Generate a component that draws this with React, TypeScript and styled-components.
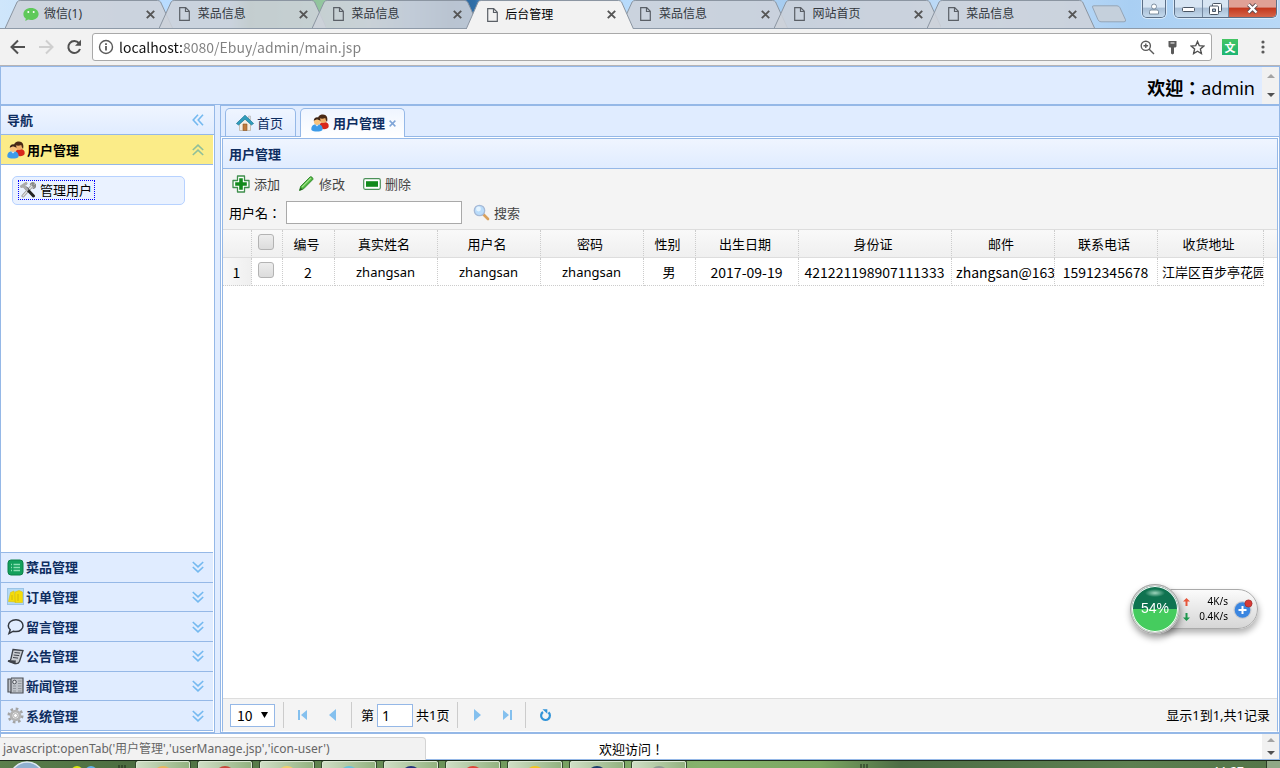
import React from 'react';
import styled, { createGlobalStyle, css } from 'styled-components';

const line = '#95b8e7';
const pale = '#e0ecff';
const navy = '#0e2d5f';
const uiFont = '"Noto Sans", "Noto Sans CJK SC", sans-serif';
const centredPunctuation = '"Noto Sans", "Noto Sans CJK TC", sans-serif';

const GlobalStyle = createGlobalStyle`
  * { box-sizing: border-box; }
  body { margin: 0; background: #fff; color: #000; font: 13px/20px ${uiFont}; }
  button, input, select { font: inherit; color: inherit; margin: 0; }
  button { padding: 0; border: 0; background: none; }
  svg { display: block; flex: none; }
  h1, h2, p { margin: 0; font-size: inherit; }
`;

const Page = styled.div`
  display: flex;
  flex-direction: column;
  height: 100vh;
  overflow: hidden;
`;

/* ---------- browser frame ---------- */

const TabStrip = styled.header`
  display: flex;
  flex: none;
  justify-content: space-between;
  height: 29px;
  padding-left: 12px;
  border-bottom: 1px solid #8e9aa8;
  background: linear-gradient(90deg, #cfe6fb 0, #b9dcff 160px, #b4d8f8 230px, #7fae86 250px, #93c79f 325px, #a9c9c4 370px,
    #6f9fc8 410px, #2f6394 450px, #2f6fa8 475px, #a7cdf2 500px, #b9dcfc 640px, #a5cbef 800px, #c6e0fa 1000px, #a9cff3 1130px, #b8d8f6 100%);
`;

const TabRow = styled.nav`
  display: flex;
  flex: 0 1 1115px;
  min-width: 0;
`;

const BrowserTabBox = styled.div<{ $active?: boolean }>`
  position: relative;
  z-index: ${p => (p.$active ? 2 : 1)};
  display: flex;
  flex: 0 1 154px;
  align-items: center;
  gap: 5px;
  height: ${p => (p.$active ? 29 : 28)}px;
  padding: 0 11px;
  color: ${p => (p.$active ? '#000' : '#33383e')};
  font-size: 12px;
`;

const TabShape = styled.svg`
  position: absolute;
  inset: 0 -7px;
  z-index: -1;
  width: calc(100% + 14px);
  height: 100%;
`;

const TabTitle = styled.span`
  flex: 1;
  overflow: hidden;
  white-space: nowrap;
`;

const IconSlot = styled.span`
  display: flex;
  flex: none;
  justify-content: center;
  width: 16px;
`;

const NewTab = styled.button`
  align-self: center;
  margin-left: 3px;
`;

const WindowControls = styled.div`
  display: flex;
  flex: none;
  gap: 8px;
  height: 18px;
  padding-right: 3px;
`;

const ControlGroup = styled.div`
  display: flex;
  overflow: hidden;
  border: 1px solid #5c6f86;
  border-top: 0;
  border-radius: 0 0 5px 5px;
  box-shadow: 0 0 0 1px #d9eafa;
`;

const controlWidths = { user: 22, wide: 28, plain: 26, close: 47 };

const ControlButton = styled.button<{ $kind: keyof typeof controlWidths }>`
  display: flex;
  align-items: center;
  justify-content: center;
  width: ${p => controlWidths[p.$kind]}px;
  border-right: 1px solid #7488a0;
  background: ${p =>
    p.$kind === 'close'
      ? 'linear-gradient(#e0a196 0 40%, #c43a20 50%, #d5654a)'
      : 'linear-gradient(#d7e5f3 0 40%, #a9bfd6 50%, #c4d9ec)'};
  &:last-child { border-right: 0; }
`;

const AddressBar = styled.div`
  display: flex;
  flex: none;
  align-items: center;
  height: 37px;
  padding: 0 9px;
  border-bottom: 1px solid #b6b4b6;
  background: #f2f2f2;
`;

const NavButtons = styled.div`
  display: flex;
  gap: 10px;
  width: 83px;
`;

const Omnibox = styled.label`
  display: flex;
  flex: 1;
  align-items: center;
  gap: 10px;
  height: 28px;
  padding: 0 6px 0 5px;
  border: 1px solid #a9a9a9;
  border-radius: 3px;
  background: #fff;
`;

const UrlField = styled.input`
  flex: 1;
  min-width: 0;
  height: 24px;
  margin-left: -5px;
  padding: 0;
  border: 0;
  outline: 0;
  background: linear-gradient(90deg, #111 64px, #808080 64px);
  background-clip: text;
  color: transparent;
  font: 14px/24px "Noto Sans CJK SC", sans-serif;
`;

const Extensions = styled.div`
  display: flex;
  align-items: center;
  gap: 18px;
  padding-left: 10px;
`;

const Translate = styled.button`
  width: 16px;
  height: 16px;
  background: linear-gradient(#43c463, #1db573);
  color: #fff;
  font: bold 11px/16px "Noto Sans CJK SC", sans-serif;
`;

/* ---------- page layout ---------- */

const Banner = styled.section`
  display: flex;
  flex: none;
  height: 39px;
  border: 1px solid ${line};
  background: ${pale};
`;

const Welcome = styled.h1`
  flex: 1;
  padding: 6px 7px 0 0;
  font-family: ${centredPunctuation};
  font-size: 18px;
  line-height: 30px;
  font-weight: 400;
  text-align: right;
`;

const ScrollRail = styled.div`
  display: flex;
  flex-direction: column;
  align-items: center;
  justify-content: space-around;
  width: 17px;
  background: #f1f1f1;
`;

const Middle = styled.main`
  display: flex;
  flex: 1;
  gap: 5px;
  min-height: 0;
  background: ${pale};
`;

const West = styled.aside`
  display: flex;
  flex: none;
  flex-direction: column;
  width: 215px;
  border: 1px solid ${line};
  background: #fff;
`;

const PanelTitle = styled.h2`
  display: flex;
  flex: none;
  align-items: center;
  justify-content: space-between;
  height: 30px;
  padding: 0 10px 0 6px;
  border-bottom: 1px solid ${line};
  background: linear-gradient(#eff5ff, ${pale});
  color: ${navy};
  font-weight: 700;
`;

const WestTitle = styled(PanelTitle)`
  height: 29px;
`;

const Accordion = styled.nav`
  display: flex;
  flex: 1;
  flex-direction: column;
  min-height: 0;
  padding: 0 1px 1px 0;
`;

const AccordionHead = styled.button<{ $open?: boolean }>`
  display: flex;
  align-items: center;
  gap: 2px;
  width: 100%;
  padding: 0 9px 0 6px;
  background: ${pale};
  color: ${navy};
  font-weight: 700;
  text-align: left;
  border-top: 1px solid ${line};
  ${p => p.$open && css`
    flex: none;
    height: 30px;
    border-top: 0;
    border-bottom: 1px solid ${line};
    background: #fbec88;
    color: #000;
  `}
  span { flex: 1; }
`;

const AccordionBody = styled.div`
  flex: 1;
  padding: 11px 28px 0 11px;
`;

const Collapsed = styled.div`
  display: grid;
  flex: none;
  grid-auto-rows: 1fr;
  height: 179px;
  border-bottom: 1px solid ${line};
`;

const MenuItem = styled.div`
  display: flex;
  height: 29px;
  padding: 3px 5px;
  border: 1px solid #b7d2ff;
  border-radius: 5px;
  background: #eaf2ff;
`;

const MenuLink = styled.a`
  display: flex;
  align-items: center;
  gap: 4px;
  height: 20px;
  padding: 0 2px 0 1px;
  border: 1px dotted #00f;
  color: #000;
  text-decoration: none;
`;

const Center = styled.section`
  display: flex;
  flex: 1;
  flex-direction: column;
  min-width: 0;
  border: 1px solid ${line};
  background: #fff;
`;

const PageTabs = styled.nav`
  display: flex;
  flex: none;
  align-items: flex-end;
  gap: 4px;
  height: 31px;
  padding-left: 4px;
  border-bottom: 1px solid ${line};
  background: ${pale};
`;

const PageTab = styled.button<{ $active?: boolean }>`
  display: flex;
  align-items: center;
  gap: 3px;
  height: 28px;
  padding: 0 12px 0 10px;
  border: 1px solid ${line};
  border-bottom: 0;
  border-radius: 5px 5px 0 0;
  background: linear-gradient(#eff5ff, ${pale});
  color: ${navy};
  ${p => p.$active && css`
    gap: 4px;
    height: 29px;
    margin-bottom: -1px;
    padding-right: 8px;
    background: linear-gradient(#eff5ff, #fff);
    font-weight: 700;
  `}
`;

const Panel = styled.section`
  display: flex;
  flex: 1;
  flex-direction: column;
  min-height: 0;
  margin: 1px 1px 0;
  border: 1px solid ${line};
  border-bottom: 1px solid #fff;
`;

const Tools = styled.div`
  flex: none;
  height: 61px;
  border-bottom: 1px solid #ddd;
  background: #f4f4f4;
`;

const ToolLine = styled.div`
  display: flex;
  align-items: center;
  gap: 18px;
  height: 29px;
  padding-left: 9px;
`;

const SearchLine = styled(ToolLine)`
  gap: 11px;
  padding-left: 6px;
`;

const ToolButton = styled.button`
  display: flex;
  align-items: center;
  gap: 4px;
  color: #444;
`;

const Field = styled.label`
  display: flex;
  align-items: center;
  gap: 5px;
  font-family: ${centredPunctuation};
`;

const NameInput = styled.input`
  width: 176px;
  height: 23px;
  border: 1px solid #a9a9a9;
  background: #fff;
`;

const GridArea = styled.div`
  flex: 1;
  min-height: 0;
  overflow: hidden;
`;

const DataTable = styled.table`
  width: 100%;
  table-layout: fixed;
  border-collapse: separate;
  border-spacing: 0;
  th, td {
    height: 28px;
    padding: 0 5px 0 4px;
    overflow: hidden;
    border-right: 1px dotted #ccc;
    font-weight: 400;
    text-align: center;
    white-space: nowrap;
  }
  thead tr { background: linear-gradient(#f9f9f9, #efefef); }
  thead th { padding-right: 8px; border-bottom: 1px solid #ddd; }
  td { border-bottom: 1px dotted #ccc; }
  th:last-child, td:last-child { border-right: 0; }
  td:last-child { border-bottom: 0; }
`;

const Cell = styled.td<{ $numeric?: boolean; $clip?: boolean }>`
  ${p => p.$numeric && css`font-family: "Noto Sans CJK SC", sans-serif; font-size: 14px; line-height: 18px;`}
  && {
    padding-right: ${p => (p.$clip ? 0 : 5)}px;
    text-align: ${p => (p.$clip ? 'left' : 'center')};
  }
`;

const RowNumber = styled.td`
  background: linear-gradient(90deg, #f9f9f9, #efefef);
  font-family: "Noto Sans CJK SC", sans-serif;
  font-size: 14px;
  line-height: 18px;
`;

const Check = styled.input`
  display: block;
  width: 16px;
  height: 16px;
  margin: -3px 0 0 2px;
  appearance: none;
  border: 1px solid #b3b3b3;
  border-radius: 3px;
  background: linear-gradient(#ededed, #dcdcdc);
`;

const Pager = styled.div`
  display: flex;
  flex: none;
  align-items: center;
  height: 33px;
  padding: 0 7px;
  border-top: 1px solid #ddd;
  background: #f4f4f4;
`;

const SelectWrap = styled.span`
  display: flex;
  align-items: center;
  svg { margin: 0 7px 0 -14px; pointer-events: none; }
`;

const PageSize = styled.select`
  width: 45px;
  height: 23px;
  padding: 0 6px;
  appearance: none;
  border: 1px solid ${line};
  border-radius: 0;
  background: #fff;
  font-family: "Noto Sans CJK SC", sans-serif;
  font-size: 14px;
`;

const Rule = styled.span`
  width: 1px;
  height: 26px;
  margin: 0 9px 0 8px;
  background: #ccc;
`;

const PagerButton = styled.button`
  display: flex;
  align-items: center;
  justify-content: center;
  width: 20px;
  height: 24px;
  & + & { margin-left: 10px; }
`;

const PageJump = styled.label`
  display: flex;
  align-items: center;
  gap: 3px;
`;

const PageInput = styled.input`
  width: 36px;
  height: 23px;
  padding: 0 4px;
  border: 1px solid ${line};
  font-size: 14px;
`;

const Summary = styled.p`
  flex: 1;
  text-align: right;
`;

const South = styled.footer`
  position: relative;
  display: flex;
  flex: none;
  height: 27px;
  border: 1px solid ${line};
  background: #fff;
`;

const Greeting = styled.p`
  flex: 1;
  padding-top: 5px;
  font-family: ${centredPunctuation};
  text-align: center;
`;

const StatusBubble = styled.div`
  position: absolute;
  left: -1px;
  bottom: -1px;
  width: 426px;
  height: 23px;
  padding-left: 3px;
  border: 1px solid #d4d4d4;
  border-width: 1px 1px 0 0;
  border-radius: 0 4px 0 0;
  background: #f2f2f2;
  color: #666;
  font-size: 12px;
  line-height: 22px;
`;

/* ---------- desktop ---------- */

const Taskbar = styled.div`
  display: flex;
  flex: none;
  height: 8px;
  overflow: hidden;
  border-top: 1px solid #1c2a1a;
  background: linear-gradient(90deg, #5b7f4c, #4c6d40 130px, #86b26c 700px, #7ba661 820px, #4d6d45 900px, #5c7f50 1130px, #547548);
`;

const TaskStart = styled.div`
  flex: none;
  width: 136px;
`;

const TaskButtons = styled.div`
  display: flex;
  gap: 8px;
`;

const TaskButton = styled.button`
  display: flex;
  justify-content: center;
  width: 54px;
  height: 12px;
  border: 1px solid #dbe8d2;
  border-radius: 2px 2px 0 0;
  box-shadow: 0 0 0 1px #33482d;
  background: linear-gradient(90deg, #cfdec5, #93b380);
`;

const Clock = styled.time`
  margin: 4px 22px 0 auto;
  color: #fff;
  font-size: 12px;
  line-height: 14px;
`;

const TaskDots = styled.svg`
  margin: 3px 0 0 174px;
`;

const ShowDesktop = styled.button`
  width: 14px;
  border-left: 1px solid #2b3b27;
  background: #8fa886;
`;

const SpeedWidget = styled.aside`
  position: fixed;
  right: 22px;
  bottom: 134px;
  display: flex;
  align-items: center;
`;

const Gauge = styled.div`
  z-index: 1;
  width: 50px;
  height: 50px;
  border: 2px solid #d5d5d5;
  border-radius: 50%;
  outline: 1px solid #a5a5a5;
  outline-offset: -1px;
  background: radial-gradient(ellipse 10px 4px at 50% 7px, #9fd5bd, transparent),
    linear-gradient(#0f7350 0 50%, #45cc5e 50%);
  box-shadow: inset 0 0 0 1px #fff, 1px 4px 7px rgba(0, 0, 0, 0.4);
  color: #fff;
  font: 14px/44px "Liberation Sans", sans-serif;
  text-align: center;
`;

const Rates = styled.div`
  display: flex;
  align-items: center;
  gap: 5px;
  height: 40px;
  margin-left: -20px;
  padding: 0 3px 0 22px;
  border: 1px solid #aaa;
  border-radius: 0 20px 20px 0;
  background: linear-gradient(#fbfbfb, #d6d6d6);
  box-shadow: 1px 4px 6px rgba(0, 0, 0, 0.3);
`;

const RateList = styled.div`
  width: 45px;
`;

const Rate = styled.div`
  display: flex;
  align-items: center;
  justify-content: space-between;
  font: 10px/15px "Noto Sans", sans-serif;
`;

/* ---------- drawings ---------- */

const PageIcon = () => (
  <svg width="11" height="14" viewBox="0 0 11 14" fill="none" stroke="#5a5f66" strokeWidth="1.2">
    <path d="M.7.7h6l3.6 3.6v9H.7zM6.5.9v3.6h3.7" />
  </svg>
);
const ChatIcon = () => (
  <svg width="16" height="15" viewBox="0 0 16 15">
    <path d="M8 1c4.500 0 7.600 2.600 7.600 6S12.500 13 8 13c-1 0-2-.1-2.900-.4L2.300 14l.5-2.400C1.300 10.500.4 9 .4 7c0-3.400 3.100-6 7.600-6z" fill="#5fc95a" />
    <circle cx="5.300" cy="5" r="1" fill="#fff" /><circle cx="10.700" cy="5" r="1" fill="#fff" />
  </svg>
);
const CloseIcon = ({ c = '#555', s = 9 }) => (
  <svg width={s} height={s} viewBox="0 0 9 9" stroke={c} strokeWidth="1.900"><path d="M.8.8l7.400 7.400M8.200.8L.8 8.200" /></svg>
);
const UsersIcon = () => (
  <svg width="18" height="18" viewBox="0 0 18 18">
    <path d="M9 14c-1-4 .5-6 4-6 3.300 0 5 1.500 4.700 4.500-.5 3-6 3.500-8.700 1.500z" fill="#d8281b" />
    <circle cx="12" cy="5.500" r="3.600" fill="#f0b06a" /><path d="M7 6C6.500 2 9.300.4 12 .5c3.400 0 5.300 3 4 7.500-1-1.500-1.700-3-1.700-4C12 5 10 4.500 9 4.500z" fill="#4a2a16" />
    <path d="M.4 16C.1 12 2 10.300 6 10.300s6 1.700 5.500 5.700c-2 2-9 2-11.100 0z" fill="#3d9be8" /><path d="M4 10.500l2 2 2-2" fill="#d8ecfb" />
    <circle cx="6.200" cy="7.600" r="3.300" fill="#f8c27c" /><path d="M2.800 7C2.600 4.500 4.200 3.200 6.200 3.200S9.700 4.500 9.500 7C8.200 6 7.200 5.500 6.200 5.500S3.800 6 2.800 7z" fill="#3c2415" />
  </svg>
);
const ToolsIcon = () => (
  <svg width="16" height="16" viewBox="0 0 16 16" fill="none" strokeLinecap="round">
    <path d="M3 14L12 4" stroke="#999" strokeWidth="3" /><path d="M3 14L12 4" stroke="#e4e4e4" strokeWidth="1.200" />
    <path d="M10.500 2.200c1-1.300 2.500-1.500 3.500-1L12.500 3l1 1.200 1.800-1.400c.3 1.500-.3 3-2 3.500" stroke="#888" strokeWidth="1.500" />
    <path d="M6 6l7.500 8" stroke="#222" strokeWidth="3" /><path d="M1.500 4.500L6 1.500M3 3.500l4 4" stroke="#aaa" strokeWidth="3" />
  </svg>
);
const HomeIcon = () => (
  <svg width="18" height="18" viewBox="0 0 18 18">
    <path d="M12.500 2h2v4h-2z" fill="#ddd" stroke="#aaa" strokeWidth=".5" />
    <path d="M3.500 8.500L9 4l5.500 4.500v8h-11z" fill="#f5eee3" stroke="#b6aa9a" strokeWidth=".7" />
    <path d="M7 10h4v6.500H7z" fill="#c07b3d" stroke="#895527" strokeWidth=".6" />
    <path d="M.4 9.500L9 1.200l8.600 8.300-2.200 1.500L9 5.200 2.600 11z" fill="#2f9dbd" stroke="#1f7592" strokeWidth=".7" />
  </svg>
);
const Chevrons = ({ dir }: { dir: 'up' | 'down' | 'left' }) => (
  <svg width="12" height="12" viewBox="0 0 12 12" fill="none" stroke={dir === 'up' ? '#8fbf9a' : '#74b9f0'} strokeWidth="1.600"
    transform={`rotate(${dir === 'up' ? 180 : dir === 'left' ? 90 : 0})`}>
    <path d="M.8 1L6 5.800 11.200 1M.8 6L6 10.800 11.200 6" />
  </svg>
);
const AddIcon = () => (
  <svg width="18" height="18" viewBox="0 0 18 18">
    <path d="M5.500 1h7v4.500H17v7h-4.500V17h-7v-4.500H1v-7h4.500z" fill="#fff" stroke="#3f8f4c" strokeWidth="1.300" strokeLinejoin="round" />
    <path d="M7.200 3.200h3.600v4h4v3.600h-4v4H7.200v-4h-4V7.200h4z" fill="#128a1c" />
  </svg>
);
const PencilIcon = () => (
  <svg width="17" height="17" viewBox="0 0 17 17">
    <path d="M1.500 15.500l1.200-4.200L12 2c1-1 3.600.8 2.800 2.500L5.600 13.800z" fill="#4fb83e" stroke="#2c8228" strokeWidth=".9" />
    <path d="M4 12.200L13 3" stroke="#a5e391" strokeWidth="1.100" /><path d="M1.500 15.500l1-3 2 2z" fill="#245c20" />
  </svg>
);
const RemoveIcon = () => (
  <svg width="18" height="12" viewBox="0 0 18 12">
    <rect x=".7" y=".7" width="16.600" height="10.600" rx="1.500" fill="#fff" stroke="#4b9158" strokeWidth="1.200" />
    <path d="M3 3.200h12v5.600H3z" fill="#128a1c" />
  </svg>
);
const SearchIcon = () => (
  <svg width="17" height="17" viewBox="0 0 17 17">
    <path d="M10 10l5 5" stroke="#d9a15d" strokeWidth="2.600" strokeLinecap="round" />
    <circle cx="6.500" cy="6.500" r="5.200" fill="#b9dcfb" stroke="#a6b9d6" strokeWidth="1.300" /><circle cx="5.500" cy="5" r="2.400" fill="#e5f4ff" />
  </svg>
);
const moduleIcons: Record<string, React.ReactNode> = {
  dish: <><rect x="1" y="1" width="15" height="15" rx="3" fill="#13a05c" stroke="#0c8148" /><path d="M4 5.500h1M4 8.500h1M4 11.500h1M6.500 5.500H13M6.500 8.500H13M6.500 11.500H13" stroke="#8be0b3" strokeWidth="1.300" /></>,
  order: <><rect x=".5" y=".5" width="16" height="16" fill="#b4d8f4" stroke="#9cc4e6" /><path d="M1.500 13.500l2-9L7 3l1.500 11zM8 4l4-1.500L15.500 4v10.500H8z" fill="#f5dc0a" stroke="#dcc40c" strokeWidth=".6" /><path d="M11 6v7M5 7v5" stroke="#d0b80c" /></>,
  message: <path d="M9 1.800c4.200 0 7 2.600 7 5.900s-2.800 5.900-7 5.900c-1 0-1.900-.1-2.700-.4L2 15.500l1.200-3.700C1.800 10.600 1.300 9.300 1.300 7.700c0-3.300 3.200-5.900 7.700-5.900z" fill="none" stroke="#333840" strokeWidth="1.500" />,
  notice: <g stroke="#3e424a"><path d="M6 1.500l10 1-3.500 11c-1 2-2 2.500-4 2L1.500 13c1.500 0 2.300-1 2.500-2.500z" fill="#c9ccd1" strokeWidth="1.300" /><path d="M7.500 4.500l5.500.6M6.700 7l5.500.6M6 9.500l5 .6" /><path d="M1 13c2 0 4-.3 7 .2-.4 1-.2 2 .5 2.600z" fill="#464a52" strokeWidth="1.500" /></g>,
  news: <g stroke="#4d5158"><path d="M1 2h3v13H1zM4 1h12v15H3" fill="#bfc3c9" strokeWidth="1.200" /><circle cx="7.500" cy="5" r="1.800" fill="#e9ebee" /><path d="M11 4h3.500M11 6.500h3.500M6 9h3M6 11.500h3M6 14h3M11 9h3.500M11 11.500h3.500M11 14h3.500" stroke="#858a92" strokeWidth=".8" /></g>,
  system: <><circle cx="8.500" cy="8.500" r="6.700" fill="none" stroke="#a3a3a3" strokeWidth="2.600" strokeDasharray="2.600 2.660" /><circle cx="8.500" cy="8.500" r="4.400" fill="#eee" stroke="#b4b4b4" strokeWidth="2.800" /><circle cx="8.500" cy="8.500" r="2" fill="#fff" stroke="#999" strokeWidth=".7" /></>,
};
const pagerShapes = {
  first: <path d="M1 1h2v10H1zM10 1v10L4 6z" />,
  prev: <path d="M9 0v12L2 6z" />,
  next: <path d="M3 0v12l7-6z" />,
  last: <path d="M9 1h2v10H9zM2 1v10l6-5z" />,
};
const PagerIcon = ({ name }: { name: keyof typeof pagerShapes }) => (
  <svg width="12" height="12" viewBox="0 0 12 12" fill="#84c0ee">{pagerShapes[name]}</svg>
);
const Arrow = ({ down }: { down?: boolean }) => (
  <svg width="8" height="4" viewBox="0 0 8 4"><path d={down ? 'M0 0h8L4 4z' : 'M0 4h8L4 0z'} fill={down ? '#505050' : '#a3a3a3'} /></svg>
);

/* ---------- data ---------- */

const browserTabs = ['微信(1)', '菜品信息', '菜品信息', '后台管理', '菜品信息', '网站首页', '菜品信息'];
const modules = [
  ['dish', '菜品管理'], ['order', '订单管理'], ['message', '留言管理'],
  ['notice', '公告管理'], ['news', '新闻管理'], ['system', '系统管理'],
];
const columns: { title: string; width: number; value: string; numeric?: boolean; clip?: boolean }[] = [
  { title: '编号', width: 52, value: '2', numeric: true },
  { title: '真实姓名', width: 103, value: 'zhangsan' },
  { title: '用户名', width: 103, value: 'zhangsan' },
  { title: '密码', width: 103, value: 'zhangsan' },
  { title: '性别', width: 52, value: '男' },
  { title: '出生日期', width: 103, value: '2017-09-19', numeric: true },
  { title: '身份证', width: 153, value: '421221198907111333', numeric: true },
  { title: '邮件', width: 103, value: 'zhangsan@163', numeric: true, clip: true },
  { title: '联系电话', width: 103, value: '15912345678', numeric: true },
  { title: '收货地址', width: 106, value: '江岸区百步亭花园', clip: true },
];
const taskIcons = ['#e8b65c', '#c8473a', '#f0cf6a', '#67c4dd', '#22337c', '#de4437', '#f2c51f', '#1d3d6b', '#8d9c92'];

const BrowserTab = ({ title, index }: { title: string; index: number }) => {
  const active = index === 3;
  return (
    <BrowserTabBox $active={active}>
      <TabShape viewBox="0 0 166 28" preserveAspectRatio="none">
        <path d="M0 28.500L12 2Q13 .5 15 .5H151Q153 .5 154 2L166 28.500" fill={active ? '#f2f2f2' : 'rgba(205,210,217,.88)'}
          stroke="#8b95a1" vectorEffect="non-scaling-stroke" />
      </TabShape>
      <IconSlot>{index === 0 ? <ChatIcon /> : <PageIcon />}</IconSlot>
      <TabTitle>{title}</TabTitle>
      <button aria-label="关闭标签页"><CloseIcon /></button>
    </BrowserTabBox>
  );
};

export default function App() {
  return (
    <Page>
      <GlobalStyle />
      <TabStrip>
        <TabRow>
          {browserTabs.map((t, i) => <BrowserTab key={i} title={t} index={i} />)}
          <NewTab aria-label="新标签页">
            <svg width="36" height="18" viewBox="0 0 36 18"><path d="M1.500 2Q1 .8 3 .8H26q2 0 3 2l5.500 12q.5 2-1.500 2H10q-2 0-3-2z" fill="#c5d0dc" stroke="#95a5b7" /></svg>
          </NewTab>
        </TabRow>
        <WindowControls>
          <ControlGroup>
            <ControlButton $kind="user" aria-label="用户">
              <svg width="12" height="12" viewBox="0 0 12 12" fill="#fff" stroke="#66788c" strokeWidth=".8"><path d="M1.500 11V8.500Q1.500 7 3 7h6q1.500 0 1.500 1.500V11z" /><circle cx="6" cy="3.500" r="2.500" /></svg>
            </ControlButton>
          </ControlGroup>
          <ControlGroup>
            <ControlButton $kind="wide" aria-label="最小化">
              <svg width="13" height="6" viewBox="0 0 13 6"><rect x=".5" y="1.500" width="12" height="4" rx="1" fill="#fff" stroke="#4a5563" /></svg>
            </ControlButton>
            <ControlButton $kind="plain" aria-label="还原">
              <svg width="13" height="12" viewBox="0 0 13 12" fill="#fff" stroke="#4a5563"><rect x="3.500" y=".5" width="9" height="8" rx="1" /><rect x=".5" y="3" width="9" height="8.500" rx="1" /><path d="M3.500 6h3v2.500h-3z" fill="#a9bfd6" /></svg>
            </ControlButton>
            <ControlButton $kind="close" aria-label="关闭">
              <svg width="13" height="11" viewBox="0 0 13 11" fill="none"><path d="M2.500 1.500l8 8M10.500 1.500l-8 8" stroke="#5e4b50" strokeWidth="4" /><path d="M2.500 1.500l8 8M10.500 1.500l-8 8" stroke="#fff" strokeWidth="2.400" /></svg>
            </ControlButton>
          </ControlGroup>
        </WindowControls>
      </TabStrip>
      <AddressBar>
        <NavButtons>
          {['#505050', '#cfcfcf'].map((c, i) => (
            <button key={c} aria-label={i ? '前进' : '后退'}>
              <svg width="18" height="16" viewBox="0 0 18 16" fill="none" stroke={c} strokeWidth="2" transform={i ? 'scale(-1 1)' : undefined}><path d="M16 8H3M9 1.500L2.500 8 9 14.500" /></svg>
            </button>
          ))}
          <button aria-label="刷新">
            <svg width="18" height="16" viewBox="0 0 18 16" fill="none" stroke="#505050" strokeWidth="2"><path d="M14 4.200A6 6 0 1 0 15 10" /><path d="M16 .8v6h-6z" fill="#505050" stroke="none" /></svg>
          </button>
        </NavButtons>
        <Omnibox>
          <svg width="16" height="16" viewBox="0 0 16 16" fill="none" stroke="#5a5a5a" strokeWidth="1.400"><circle cx="8" cy="8" r="6.500" /><path d="M8 7v4.500M8 4.200v1.700" strokeWidth="1.800" /></svg>
          <UrlField aria-label="地址" defaultValue="localhost:8080/Ebuy/admin/main.jsp" />
          <svg width="15" height="15" viewBox="0 0 15 15" fill="none" stroke="#5a5a5a" strokeWidth="1.400"><circle cx="5.800" cy="5.800" r="4.600" /><path d="M9.200 9.200l4.800 4.800M3.500 5.800h4.600M5.800 3.500v4.600" /></svg>
          <svg width="15" height="15" viewBox="0 0 15 15" fill="#5a5a5a"><path d="M3.500 1h8v5.500l-1 1H9v6L7.500 14.500 6 13.500v-6H4.500l-1-1z" /><path d="M5.500 3h4" stroke="#fff" /></svg>
          <svg width="15" height="15" viewBox="0 0 15 15" fill="none" stroke="#505050" strokeWidth="1.400"><path d="M7.500 1.500l1.800 4.200 4.500.4-3.400 3 1 4.400-3.900-2.300-3.900 2.300 1-4.400-3.400-3 4.500-.4z" /></svg>
        </Omnibox>
        <Extensions>
          <Translate>文</Translate>
          <button aria-label="菜单">
            <svg width="15" height="14" viewBox="0 0 15 14" fill="#5a5a5a"><circle cx="7" cy="2" r="1.600" /><circle cx="7" cy="7" r="1.600" /><circle cx="7" cy="12" r="1.600" /></svg>
          </button>
        </Extensions>
      </AddressBar>

      <Banner>
        <Welcome><strong>欢迎：</strong>admin</Welcome>
        <ScrollRail><Arrow /><Arrow down /></ScrollRail>
      </Banner>

      <Middle>
        <West>
          <WestTitle>导航<button aria-label="折叠"><Chevrons dir="left" /></button></WestTitle>
          <Accordion>
            <AccordionHead $open><UsersIcon /><span>用户管理</span><Chevrons dir="up" /></AccordionHead>
            <AccordionBody>
              <MenuItem><MenuLink href="#users"><ToolsIcon />管理用户</MenuLink></MenuItem>
            </AccordionBody>
            <Collapsed>
              {modules.map(([icon, name]) => (
                <AccordionHead key={icon}>
                  <svg width="17" height="17" viewBox="0 0 17 17">{moduleIcons[icon]}</svg>
                  <span>{name}</span>
                  <Chevrons dir="down" />
                </AccordionHead>
              ))}
            </Collapsed>
          </Accordion>
        </West>

        <Center>
          <PageTabs>
            <PageTab><HomeIcon />首页</PageTab>
            <PageTab $active><UsersIcon />用户管理<CloseIcon c="#7fa5d8" s={7} /></PageTab>
          </PageTabs>
          <Panel>
            <PanelTitle>用户管理</PanelTitle>
            <Tools>
              <ToolLine>
                <ToolButton><AddIcon />添加</ToolButton>
                <ToolButton><PencilIcon />修改</ToolButton>
                <ToolButton><RemoveIcon />删除</ToolButton>
              </ToolLine>
              <SearchLine>
                <Field>用户名：<NameInput type="text" /></Field>
                <ToolButton><SearchIcon />搜索</ToolButton>
              </SearchLine>
            </Tools>
            <GridArea>
              <DataTable>
                <colgroup>
                  <col width={29} />
                  <col width={31} />
                  {columns.map(c => <col key={c.title} width={c.width} />)}
                  <col />
                </colgroup>
                <thead>
                  <tr>
                    <th />
                    <th><Check type="checkbox" aria-label="全选" /></th>
                    {columns.map(c => <th key={c.title}>{c.title}</th>)}
                    <th />
                  </tr>
                </thead>
                <tbody>
                  <tr>
                    <RowNumber>1</RowNumber>
                    <td><Check type="checkbox" aria-label="选择第1行" /></td>
                    {columns.map(c => <Cell key={c.title} $numeric={c.numeric} $clip={c.clip}>{c.value}</Cell>)}
                    <td />
                  </tr>
                </tbody>
              </DataTable>
            </GridArea>
            <Pager>
              <SelectWrap>
                <PageSize aria-label="每页记录数" defaultValue="10"><option>10</option><option>20</option></PageSize>
                <svg width="7" height="6" viewBox="0 0 7 6"><path d="M0 0h7L3.500 6z" /></svg>
              </SelectWrap>
              <Rule />
              <PagerButton aria-label="首页"><PagerIcon name="first" /></PagerButton>
              <PagerButton aria-label="上一页"><PagerIcon name="prev" /></PagerButton>
              <Rule />
              <PageJump>第<PageInput defaultValue="1" />共1页</PageJump>
              <Rule />
              <PagerButton aria-label="下一页"><PagerIcon name="next" /></PagerButton>
              <PagerButton aria-label="末页"><PagerIcon name="last" /></PagerButton>
              <Rule />
              <PagerButton aria-label="刷新">
                <svg width="13" height="13" viewBox="0 0 13 13" fill="none" stroke="#3294d8" strokeWidth="2.200"><path d="M9.500 3.400a4.400 4.400 0 1 1-5.500-.4" /><path d="M3.500.3h4.800v4.500z" fill="#3294d8" stroke="none" /></svg>
              </PagerButton>
              <Summary>显示1到1,共1记录</Summary>
            </Pager>
          </Panel>
        </Center>
      </Middle>

      <South>
        <Greeting>欢迎访问！</Greeting>
        <ScrollRail><Arrow /><Arrow down /></ScrollRail>
        <StatusBubble>javascript:openTab('用户管理','userManage.jsp','icon-user')</StatusBubble>
      </South>

      <Taskbar>
        <TaskStart>
          <svg width="136" height="8" viewBox="0 0 136 8">
            <circle cx="27" cy="18" r="17" fill="#8fb0cf" stroke="#dfeaf2" strokeWidth="1.500" />
            <circle cx="77" cy="11" r="6" fill="#d8e60e" /><circle cx="91" cy="11" r="6" fill="#5db1e8" />
            <path d="M118 5h8M118 7h8" stroke="#1d2a19" strokeDasharray="2 1" />
          </svg>
        </TaskStart>
        <TaskButtons>
          {taskIcons.map((c, i) => (
            <TaskButton key={i} aria-label={`任务 ${i + 1}`}>
              <svg width="24" height="8" viewBox="0 0 24 8"><circle cx="12" cy="14" r="10" fill={c} /></svg>
            </TaskButton>
          ))}
        </TaskButtons>
        <TaskDots width="9" height="4" viewBox="0 0 9 4"><path d="M0 1h9M0 3h9" stroke="#1d2a19" strokeDasharray="2 1" /></TaskDots>
        <Clock>11:27</Clock>
        <ShowDesktop aria-label="显示桌面" />
      </Taskbar>

      <SpeedWidget>
        <Gauge>54%</Gauge>
        <Rates>
          <RateList>
            <Rate><svg width="7" height="8" viewBox="0 0 7 8" fill="#e8573c"><path d="M3.500 0L7 3.500H4.500V8h-2V3.500H0z" /></svg>4K/s</Rate>
            <Rate><svg width="7" height="8" viewBox="0 0 7 8" fill="#1f9a50"><path d="M3.500 8L7 4.500H4.500V0h-2v4.500H0z" /></svg>0.4K/s</Rate>
          </RateList>
          <svg width="21" height="22" viewBox="0 0 21 22">
            <circle cx="9.500" cy="12" r="9" fill="#c9ccd1" /><circle cx="9.500" cy="12" r="7.800" fill="#3b86e0" />
            <path d="M9.500 8v8M5.500 12h8" stroke="#fff" strokeWidth="2" /><circle cx="15.500" cy="5.500" r="3.600" fill="#d83a35" stroke="#9c2a28" strokeWidth=".7" />
          </svg>
        </Rates>
      </SpeedWidget>
    </Page>
  );
}
